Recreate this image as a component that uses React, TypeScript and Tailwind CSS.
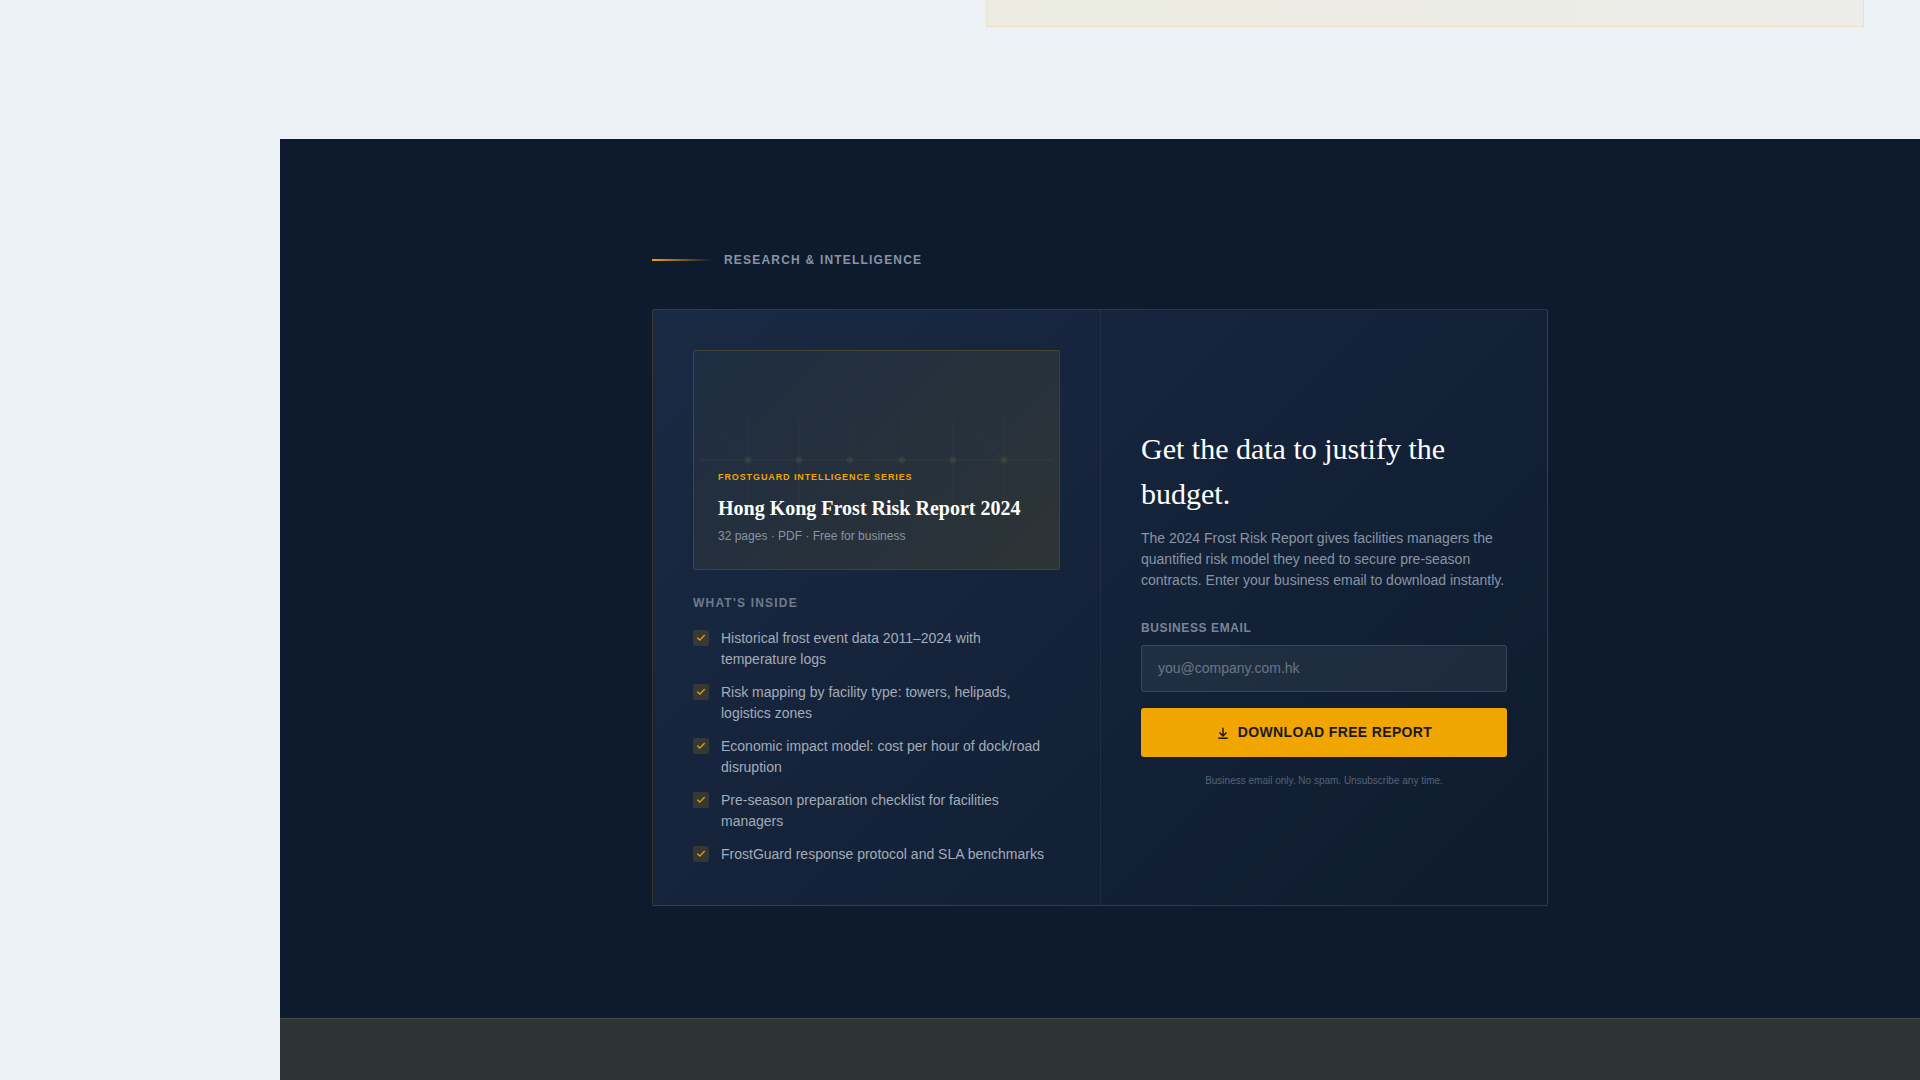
const items = [
  "Historical frost event data 2011–2024 with temperature logs",
  "Risk mapping by facility type: towers, helipads, logistics zones",
  "Economic impact model: cost per hour of dock/road disruption",
  "Pre-season preparation checklist for facilities managers",
  "FrostGuard response protocol and SLA benchmarks",
];

const nodes = [54, 105, 156, 208, 259, 310];

function CoverPattern() {
  return (
    <svg className="absolute inset-0 h-full w-full" viewBox="0 0 365 218" fill="none" stroke="#b8b070" strokeOpacity="0.09">
      <line x1="6" y1="109" x2="359" y2="109" />
      {nodes.map((x) => (
        <g key={x}>
          <line x1={x} y1="66" x2={x} y2="160" strokeOpacity="0.05" />
          <circle cx={x} cy="109" r="3.5" fill="#b8b070" fillOpacity="0.09" stroke="none" />
        </g>
      ))}
      <path d="M26 82L54 109L26 136M82 82L54 109L82 136" strokeOpacity="0.04" />
      <path d="M279 79L310 109L279 139M341 79L310 109L341 139" strokeOpacity="0.05" />
    </svg>
  );
}

function ReportCover() {
  return (
    <div className="relative flex h-[220px] flex-col justify-end overflow-hidden rounded-[2px] border border-[#f0a500]/15 bg-[linear-gradient(135deg,#1e2d42,#2d3436)] px-6 pb-6">
      <CoverPattern />
      <div className="relative">
        <div className="mb-[11px] text-[9px] leading-[14px] font-bold tracking-[0.1em] text-[#f0a500] uppercase">
          FrostGuard Intelligence Series
        </div>
        <div className="mb-[6px] font-['Liberation_Serif',serif] text-[20px] leading-[26px] font-bold text-white">
          Hong Kong Frost Risk Report 2024
        </div>
        <div className="text-[12px] leading-[18px] text-[#8a94a3]">32 pages · PDF · Free for business</div>
      </div>
    </div>
  );
}

function Inside() {
  return (
    <div className="mt-6">
      <div className="mb-4 text-[12px] leading-[18px] font-bold tracking-[0.1em] text-[#6f7a8a] uppercase">What's Inside</div>
      <ul className="flex flex-col gap-3">
        {items.map((item) => (
          <li key={item} className="flex gap-3 text-[14px] leading-[21px] text-[#a3acb8]">
            <span className="mt-[2px] flex h-4 w-4 shrink-0 items-center justify-center rounded-[2px] bg-[#f0a500]/15">
              <svg className="h-2.5 w-2.5 text-[#f0a500]" viewBox="0 0 24 24" fill="none" stroke="currentColor" strokeWidth="3" strokeLinecap="round" strokeLinejoin="round">
                <path d="M20 6L9 17l-5-5" />
              </svg>
            </span>
            {item}
          </li>
        ))}
      </ul>
    </div>
  );
}

function DownloadForm() {
  return (
    <div className="flex flex-col justify-center p-10">
      <h2 className="mb-3 font-['Liberation_Serif',serif] text-[30px] leading-[45px] font-normal text-white">
        Get the data to justify the budget.
      </h2>
      <p className="mb-7 text-[14px] leading-[21px] text-[#8a94a3]">
        The 2024 Frost Risk Report gives facilities managers the quantified risk model they need to secure pre-season contracts. Enter your business email to download instantly.
      </p>
      <label className="mb-2 text-[12px] leading-[18px] font-bold tracking-[0.05em] text-[#7a8595] uppercase">Business Email</label>
      <input
        type="email"
        placeholder="you@company.com.hk"
        className="mb-4 h-[47px] w-full rounded-[3px] border border-white/[0.12] bg-white/[0.06] px-4 pb-[2px] text-[14px] text-white outline-none placeholder:text-[#6b7686]"
      />
      <button className="flex h-[49px] w-full items-center justify-center gap-2 rounded-[3px] bg-[#f0a500] text-[14px] font-bold tracking-[0.025em] text-[#1a1a1a] uppercase">
        <svg className="h-3.5 w-3.5" viewBox="0 0 24 24" fill="none" stroke="currentColor" strokeWidth="2.5">
          <path d="M12 3v13M6 11l6 6 6-6M4 21h16" />
        </svg>
        Download Free Report
      </button>
      <p className="mt-4 text-center text-[10px] leading-[16px] text-[#566274]">Business email only. No spam. Unsubscribe any time.</p>
    </div>
  );
}

export default function App() {
  return (
    <div className="flex h-[1080px] overflow-hidden bg-[#edf2f7] font-['Liberation_Sans',Arial,sans-serif]">
      <aside className="w-[280px] shrink-0" />
      <main className="flex min-w-0 flex-1 flex-col">
        <div className="flex h-[139px] shrink-0 items-start justify-end pr-[56px]">
          <div className="h-[27px] w-[878px] border border-t-0 border-[#f0a500]/15 bg-[linear-gradient(90deg,#ebebe0,#ecedea)]" />
        </div>
        <section className="h-[879px] shrink-0 bg-[#0e1b2e] py-28">
          <div className="mx-auto w-[896px]">
            <div className="mb-10 flex items-center gap-3">
              <span className="h-[2px] w-[60px] bg-[linear-gradient(90deg,#f0a500,transparent)]" />
              <span className="text-[12px] leading-[18px] font-bold tracking-[0.1em] text-[#8a94a3] uppercase">Research &amp; Intelligence</span>
            </div>
            <div className="grid h-[597px] grid-cols-[448px_1fr] rounded-[2px] border border-[#f0a500]/[0.18] bg-[linear-gradient(135deg,#1a2a44,#0e1b2e)]">
              <div className="border-r border-white/[0.06] p-10">
                <ReportCover />
                <Inside />
              </div>
              <DownloadForm />
            </div>
          </div>
        </section>
        <div className="flex-1 border-t border-white/10 bg-[#2d3436]" />
      </main>
    </div>
  );
}
